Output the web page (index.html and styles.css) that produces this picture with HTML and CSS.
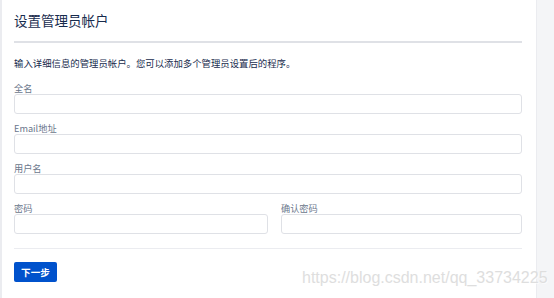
FILE: index.html
```html
<!DOCTYPE html>
<html lang="zh-CN">
<head>
    <meta charset="UTF-8">
    <meta name="viewport" content="width=device-width, initial-scale=1.0">
    <title>设置管理员帐户</title>
    <link rel="stylesheet" href="styles.css">
</head>
<body>

    <div class="pageWrap">
        <div class="setupPanel">

            <h1 class="panelTitle">设置管理员帐户</h1>
            <div class="titleRule"></div>

            <p class="intro">输入详细信息的管理员帐户。您可以添加多个管理员设置后的程序。</p>

            <div class="field">
                <label for="fullname">全名</label>
                <input type="text" id="fullname">
            </div>

            <div class="field">
                <label for="email">Email地址</label>
                <input type="text" id="email">
            </div>

            <div class="field">
                <label for="username">用户名</label>
                <input type="text" id="username">
            </div>

            <div class="fieldRow">
                <div class="field">
                    <label for="password">密码</label>
                    <input type="password" id="password">
                </div>
                <div class="field">
                    <label for="confirm">确认密码</label>
                    <input type="password" id="confirm">
                </div>
            </div>

            <div class="footRule"></div>

            <button class="nextBtn">下一步</button>
        </div>

        <div class="sideStrip"></div>
    </div>

    <div class="watermark">https://blog.csdn.net/qq_33734225</div>

</body>
</html>
```

FILE: styles.css
```css
* {
    margin: 0;
    padding: 0;
    box-sizing: border-box;
}

body {
    font-family: "Noto Sans CJK SC", "Noto Sans", sans-serif;
    background-color: #ffffff;
    color: #172b4d;
    height: 298px;
    overflow: hidden;
}

.pageWrap {
    display: flex;
    height: 298px;
    border-left: 2px solid #ebecf0;
}

.setupPanel {
    flex: 1;
    padding: 12px 14px 0 12px;
    background-color: #ffffff;
}

.sideStrip {
    width: 18px;
    background-color: #f4f5f7;
    border-left: 1px solid #ebecf0;
}

.panelTitle {
    font-size: 13.5px;
    font-weight: normal;
    line-height: 16px;
    color: #172b4d;
}

.titleRule {
    height: 2px;
    background-color: #dfe1e6;
    margin-top: 13px;
}

.intro {
    font-size: 9.4px;
    line-height: 12px;
    margin-top: 14px;
    color: #172b4d;
}

.field {
    display: flex;
    flex-direction: column;
    margin-top: 8px;
}

.intro + .field {
    margin-top: 13px;
}

.field label {
    font-size: 9.2px;
    line-height: 12px;
    color: #6b778c;
}

.field input {
    height: 20px;
    width: 100%;
    border: 1.5px solid #dfe1e6;
    border-radius: 3px;
    background-color: #ffffff;
}

.fieldRow {
    display: grid;
    grid-template-columns: 254px 1fr;
    column-gap: 13px;
}

.footRule {
    height: 1px;
    background-color: #ebecf0;
    margin-top: 14px;
}

.nextBtn {
    margin-top: 13px;
    width: 43px;
    height: 20px;
    border: none;
    border-radius: 2px;
    background-color: #0052cc;
    color: #ffffff;
    font-family: "Noto Sans CJK SC", sans-serif;
    font-size: 9.6px;
    font-weight: bold;
}

.watermark {
    position: absolute;
    left: 302px;
    top: 268px;
    font-family: "Liberation Sans", Arial, sans-serif;
    font-size: 16px;
    line-height: 20px;
    color: #dedede;
    text-shadow: 1px 1px 0 rgba(255, 255, 255, 0.6);
    white-space: nowrap;
}
```
